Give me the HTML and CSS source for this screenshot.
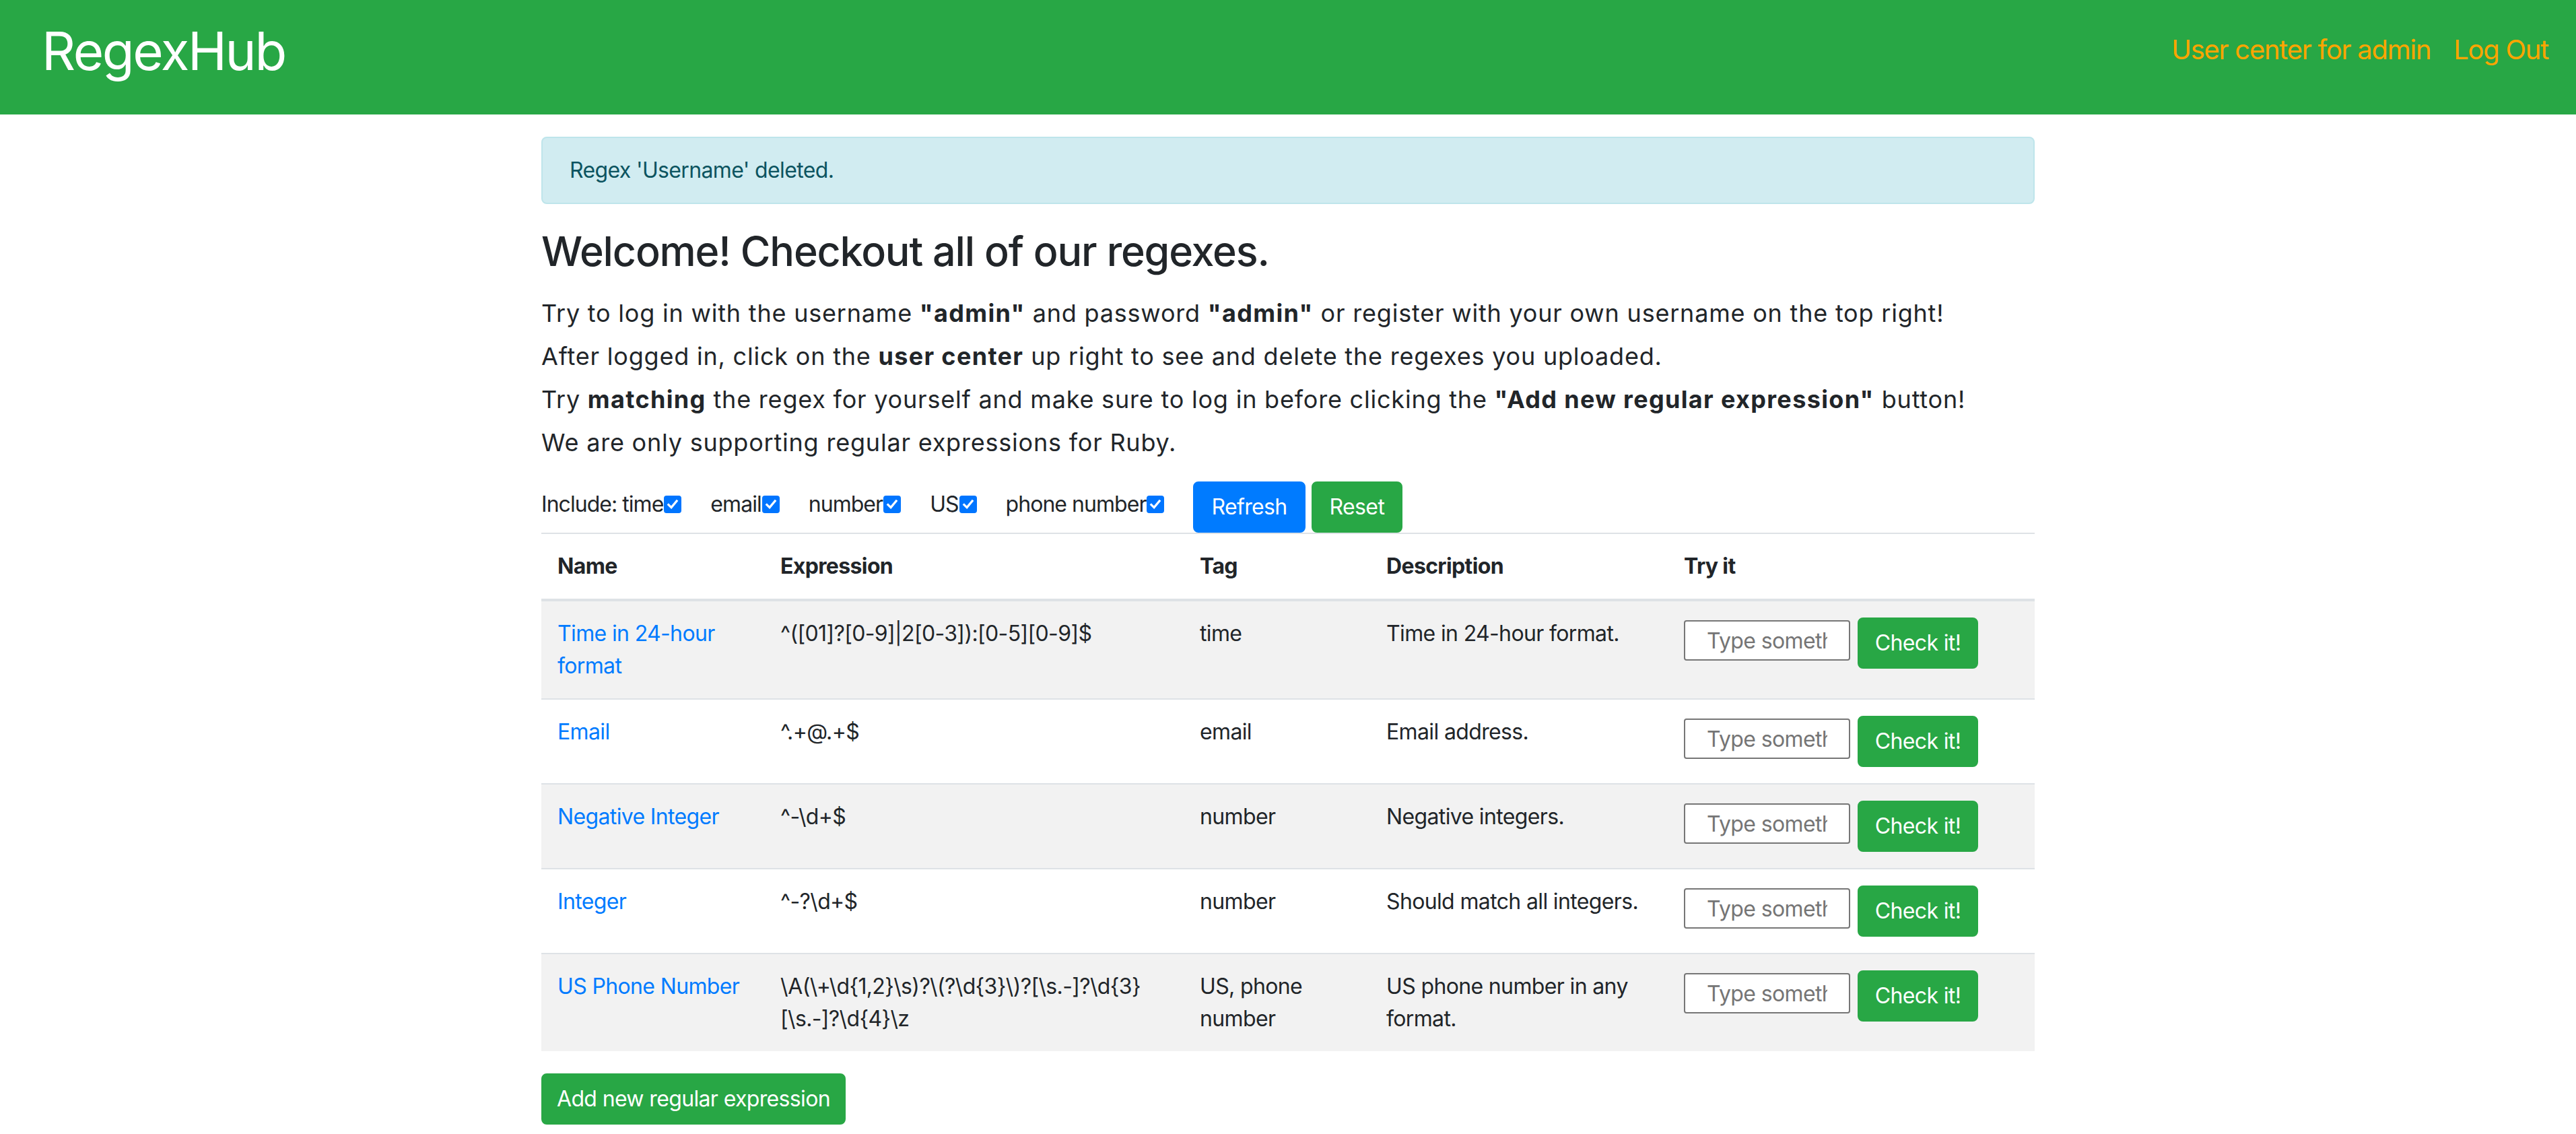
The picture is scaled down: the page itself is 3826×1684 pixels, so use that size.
FILE: index.html
```html
<!DOCTYPE html>
<html lang="en">
<head>
<meta charset="utf-8">
<title>RegexHub</title>
<link rel="stylesheet" href="styles.css">
</head>
<body>
<nav class="navbar">
  <a class="brand" href="#">RegexHub</a>
  <div class="nav-links">
    <a href="#">User center for admin</a>
    <a href="#">Log Out</a>
  </div>
</nav>
<main class="container">
  <div class="alert">Regex 'Username' deleted.</div>
  <h2 class="title">Welcome! Checkout all of our regexes.</h2>
  <p class="intro">Try to log in with the username <b>"admin"</b> and password <b>"admin"</b> or register with your own username on the top right!<br>After logged in, click on the <b>user center</b> up right to see and delete the regexes you uploaded.<br>Try <b>matching</b> the regex for yourself and make sure to log in before clicking the <b>"Add new regular expression"</b> button!<br>We are only supporting regular expressions for Ruby.</p>
  <form class="filters">
    <label class="opt">Include: time<span class="cb"><svg viewBox="0 0 16 16"><path d="M3.6 8.4l3 3 5.8-7"/></svg></span></label>
    <label class="opt">email<span class="cb"><svg viewBox="0 0 16 16"><path d="M3.6 8.4l3 3 5.8-7"/></svg></span></label>
    <label class="opt">number<span class="cb"><svg viewBox="0 0 16 16"><path d="M3.6 8.4l3 3 5.8-7"/></svg></span></label>
    <label class="opt">US<span class="cb"><svg viewBox="0 0 16 16"><path d="M3.6 8.4l3 3 5.8-7"/></svg></span></label>
    <label class="opt">phone number<span class="cb"><svg viewBox="0 0 16 16"><path d="M3.6 8.4l3 3 5.8-7"/></svg></span></label>
    <div class="btn-group">
      <button type="button" class="btn btn-primary">Refresh</button>
      <button type="button" class="btn btn-success">Reset</button>
    </div>
  </form>
  <table class="table">
    <colgroup>
      <col class="c-name"><col class="c-expr"><col class="c-tag"><col class="c-desc"><col class="c-try">
    </colgroup>
    <thead>
      <tr><th>Name</th><th>Expression</th><th>Tag</th><th>Description</th><th>Try it</th></tr>
    </thead>
    <tbody>
      <tr>
        <td><a href="#">Time in 24-hour<br>format</a></td>
        <td>^([01]?[0-9]|2[0-3]):[0-5][0-9]$</td>
        <td>time</td>
        <td>Time in 24-hour format.</td>
        <td><div class="try"><input type="text" placeholder="Type something..."><button type="button" class="btn btn-success">Check it!</button></div></td>
      </tr>
      <tr>
        <td><a href="#">Email</a></td>
        <td>^.+@.+$</td>
        <td>email</td>
        <td>Email address.</td>
        <td><div class="try"><input type="text" placeholder="Type something..."><button type="button" class="btn btn-success">Check it!</button></div></td>
      </tr>
      <tr>
        <td><a href="#">Negative Integer</a></td>
        <td>^-\d+$</td>
        <td>number</td>
        <td>Negative integers.</td>
        <td><div class="try"><input type="text" placeholder="Type something..."><button type="button" class="btn btn-success">Check it!</button></div></td>
      </tr>
      <tr>
        <td><a href="#">Integer</a></td>
        <td>^-?\d+$</td>
        <td>number</td>
        <td>Should match all integers.</td>
        <td><div class="try"><input type="text" placeholder="Type something..."><button type="button" class="btn btn-success">Check it!</button></div></td>
      </tr>
      <tr>
        <td><a href="#">US Phone Number</a></td>
        <td>\A(\+\d{1,2}\s)?\(?\d{3}\)?[\s.-]?\d{3}<br>[\s.-]?\d{4}\z</td>
        <td>US, phone<br>number</td>
        <td>US phone number in any<br>format.</td>
        <td><div class="try"><input type="text" placeholder="Type something..."><button type="button" class="btn btn-success">Check it!</button></div></td>
      </tr>
    </tbody>
  </table>
  <button type="button" class="btn btn-success btn-add">Add new regular expression</button>
</main>
</body>
</html>
```
FILE: styles.css
```css
* { box-sizing: border-box; }

html, body {
  margin: 0;
  padding: 0;
  background: #fff;
}

body {
  font-family: "Inter", "Roboto", sans-serif;
  font-size: 32px;
  line-height: 48px;
  color: #212529;
  letter-spacing: -0.02em;
}

a { text-decoration: none; }

.navbar {
  height: 170px;
  background: #28a745;
  display: flex;
  align-items: flex-start;
  justify-content: space-between;
  padding: 0 41px 0 62px;
}

.brand {
  color: #fff;
  font-size: 78px;
  line-height: 96px;
  letter-spacing: -0.03em;
  margin-top: 28px;
}

.nav-links {
  display: flex;
  gap: 34px;
  margin-top: 44px;
}

.nav-links a {
  color: #ffa500;
  font-size: 40px;
  line-height: 60px;
  letter-spacing: -0.032em;
}

.container {
  width: 2218px;
  margin: 0 auto;
}

.alert {
  margin-top: 33px;
  margin-bottom: 32px;
  padding: 24px 40px;
  background: #d1ecf1;
  border: 2px solid #bee5eb;
  border-radius: 8px;
  color: #0c5460;
}

.title {
  margin: 0 0 16px;
  font-size: 61px;
  line-height: 77px;
  font-weight: 500;
  letter-spacing: -0.019em;
}

.intro {
  margin: 21px 0 0;
  font-size: 36px;
  line-height: 64px;
  letter-spacing: 0.022em;
}

.intro b {
  font-weight: 700;
  letter-spacing: 0.037em;
}

.filters {
  display: flex;
  align-items: center;
  gap: 43px;
  margin-top: 26px;
  height: 76px;
}

.opt {
  display: flex;
  align-items: center;
  font-size: 32px;
  letter-spacing: -0.03em;
  margin-top: -8px;
}

.cb {
  width: 26px;
  height: 26px;
  border-radius: 4px;
  background: #0075ff;
  display: inline-flex;
  align-items: center;
  justify-content: center;
  margin-left: 1px;
}

.cb svg {
  width: 22px;
  height: 22px;
  fill: none;
  stroke: #fff;
  stroke-width: 2.4;
  stroke-linecap: square;
}

.btn-group {
  display: flex;
  gap: 9px;
}

.btn {
  font-family: inherit;
  font-size: 32px;
  line-height: 48px;
  letter-spacing: -0.02em;
  height: 76px;
  padding: 0 25px;
  border-radius: 8px;
  border: 2px solid transparent;
  color: #fff;
  cursor: pointer;
}

.btn-primary { background: #007bff; border-color: #007bff; }
.btn-success { background: #28a745; border-color: #28a745; }

.table {
  width: 100%;
  border-collapse: collapse;
  table-layout: fixed;
  margin: 0;
}

.c-name { width: 331px; }
.c-expr { width: 623px; }
.c-tag { width: 277px; }
.c-desc { width: 442px; }
.c-try { width: 545px; }

.table th,
.table td {
  padding: 24px;
  border-top: 2px solid #dee2e6;
  text-align: left;
  vertical-align: top;
  white-space: nowrap;
}

.table thead th {
  border-bottom: 4px solid #dee2e6;
  font-weight: 700;
}

.table tbody tr:nth-child(odd) { background: #f2f2f2; }

.table td a { color: #007bff; }

.try {
  display: flex;
  align-items: flex-start;
  gap: 11px;
}

.try input {
  width: 247px;
  height: 60px;
  margin-top: 4px;
  padding: 0 32px;
  border: 2px solid #767676;
  border-radius: 4px;
  background: #fff;
  font-family: inherit;
  font-size: 32px;
  letter-spacing: -0.02em;
  color: #212529;
}

.try input::placeholder { color: #757575; }

.try .btn { width: 179px; padding: 0; }

.btn-add {
  margin-top: 33px;
  width: 452px;
  padding: 0;
}
```
